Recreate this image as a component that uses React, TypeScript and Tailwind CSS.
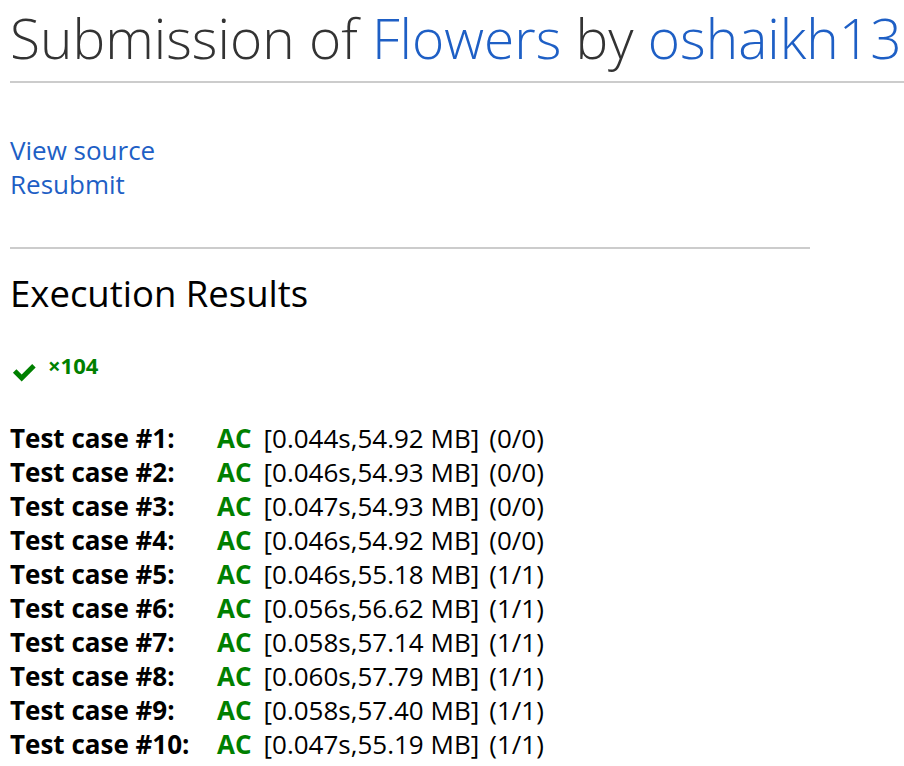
import React from "react";

const cases = [
  ["0.044s,54.92 MB", "0/0"],
  ["0.046s,54.93 MB", "0/0"],
  ["0.047s,54.93 MB", "0/0"],
  ["0.046s,54.92 MB", "0/0"],
  ["0.046s,55.18 MB", "1/1"],
  ["0.056s,56.62 MB", "1/1"],
  ["0.058s,57.14 MB", "1/1"],
  ["0.060s,57.79 MB", "1/1"],
  ["0.058s,57.40 MB", "1/1"],
  ["0.047s,55.19 MB", "1/1"],
];

export default function App() {
  return (
    <main className="w-[904px] h-[766px] overflow-hidden bg-white pl-[10px] font-['Open_Sans',sans-serif]">
      {/* Title */}
      <h1 className="pt-[6px] text-[55px] leading-[64px] font-light text-[#333] whitespace-nowrap">
        Submission of <a className="text-[#1e5fc5]">Flowers</a> by <a className="text-[#1e5fc5]">oshaikh13</a>
      </h1>
      <div className="mt-[11px] h-[2px] bg-[#ccc]" />

      {/* Links */}
      <div className="mt-[50px] flex flex-col text-[26px] leading-[34px] text-[#1e5fc5]">
        <a>View source</a>
        <a>Resubmit</a>
      </div>
      <div className="mt-[46px] w-[800px] h-[2px] bg-[#ccc]" />

      {/* Results */}
      <h2 className="mt-[22px] text-[36.5px] leading-[44px] text-black">Execution Results</h2>
      <div className="mt-[36px] flex items-start gap-[10px] text-[#008000]">
        <svg width="28" height="28" viewBox="0 0 24 24" className="mt-[6px]">
          <path d="M2.5 13.5l3-3 4.5 4.5 9-9 3 3-12 12z" fill="#008000" />
        </svg>
        <span className="mt-[2px] text-[22px] leading-[24px] font-bold">×104</span>
      </div>

      <div className="mt-[36px] flex flex-col">
        {cases.map(([t, p], i) => (
          <div key={i} className="flex items-baseline text-[26px] leading-[34px] text-black whitespace-nowrap">
            <span className="w-[207px] font-bold">Test case #{i + 1}:</span>
            <span className="font-bold text-[#008000]">AC</span>
            <span className="ml-[12px]">[{t}]</span>
            <span className="ml-[10px]">({p})</span>
          </div>
        ))}
      </div>
    </main>
  );
}
